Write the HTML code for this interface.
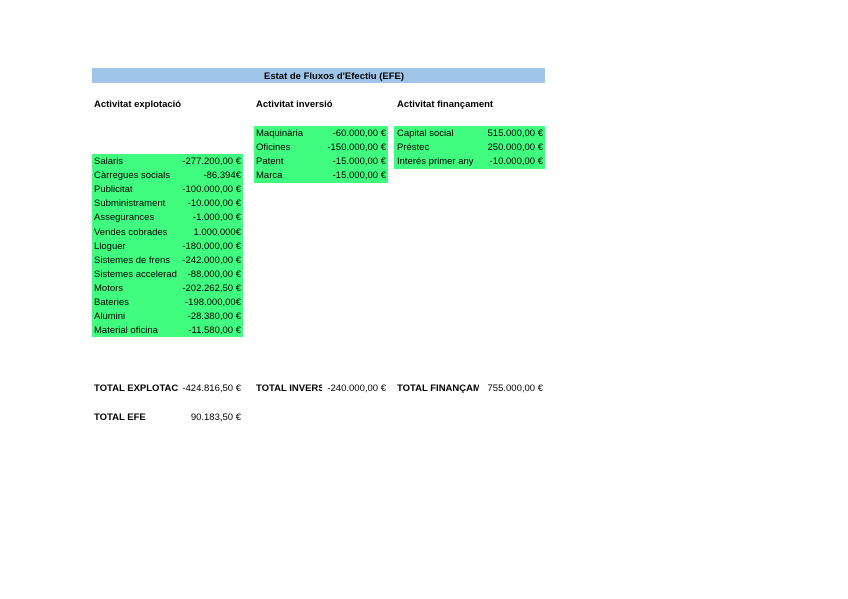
<!DOCTYPE html>
<html><head><meta charset="utf-8"><style>
body{margin:0;width:848px;height:599px;background:#fff;font-family:"Liberation Sans",sans-serif;font-size:9.5px;color:#000;position:relative;overflow:hidden}
.a{position:absolute;white-space:nowrap}
.g{position:absolute;background:#40fd80}
.r{position:absolute;height:14.1px;line-height:14.1px;padding-top:2px;box-sizing:content-box;overflow:hidden;white-space:nowrap}
.v{text-align:right}
.b{font-weight:bold}
</style></head><body>
<div class="a" style="left:92px;top:68px;width:453px;height:15px;background:#9fc5e8"></div>
<div class="a b" style="left:264px;top:69px;line-height:15px">Estat de Fluxos d'Efectiu (EFE)</div>
<div class="a b" style="left:94px;top:99px">Activitat explotació</div>
<div class="a b" style="left:256px;top:99px">Activitat inversió</div>
<div class="a b" style="left:397px;top:99px">Activitat finançament</div>

<div class="g" style="left:92px;top:154px;width:151px;height:183px"></div>
<div class="g" style="left:254px;top:126px;width:134px;height:57px"></div>
<div class="g" style="left:394px;top:126px;width:151px;height:43px"></div>

<script>
function rows(x1,w1,x2,w2,y,data){let h='';data.forEach((d,i)=>{let t=y+i*14.1-1;h+=`<div class="r" style="left:${x1}px;top:${t}px;width:${w1}px">${d[0]}</div><div class="r v" style="left:${x2}px;top:${t}px;width:${w2}px">${d[1]}</div>`});document.body.insertAdjacentHTML('beforeend',h)}
rows(94,84,170,71,154,[["Salaris","-277.200,00 €"],["Càrregues socials","-86.394€"],["Publicitat","-100.000,00 €"],["Subministrament","-10.000,00 €"],["Assegurances","-1.000,00 €"],["Vendes cobrades","1.000.000€"],["Lloguer","-180.000,00 €"],["Sistemes de frens","-242.000,00 €"],["Sistemes accelerad","-88.000,00 €"],["Motors","-202.262,50 €"],["Bateries","-198.000,00€"],["Alumini","-28.380,00 €"],["Material oficina","-11.580,00 €"]]);
rows(256,70,310,76,126,[["Maquinària","-60.000,00 €"],["Oficines","-150.000,00 €"],["Patent","-15.000,00 €"],["Marca","-15.000,00 €"]]);
rows(397,80,470,73,126,[["Capital social","515.000,00 €"],["Préstec","250.000,00 €"],["Interés primer any","-10.000,00 €"]]);
</script>
<div class="r b" style="left:94px;top:380px;width:84px">TOTAL EXPLOTACIÓ</div>
<div class="r v" style="left:170px;top:380px;width:71px">-424.816,50 €</div>
<div class="r b" style="left:256px;top:380px;width:66px">TOTAL INVERSIÓ</div>
<div class="r v" style="left:310px;top:380px;width:76px">-240.000,00 €</div>
<div class="r b" style="left:397px;top:380px;width:82px">TOTAL FINANÇAMENT</div>
<div class="r v" style="left:470px;top:380px;width:73px">755.000,00 €</div>
<div class="r b" style="left:94px;top:409px;width:84px">TOTAL EFE</div>
<div class="r v" style="left:170px;top:409px;width:71px">90.183,50 €</div>
</body></html>
